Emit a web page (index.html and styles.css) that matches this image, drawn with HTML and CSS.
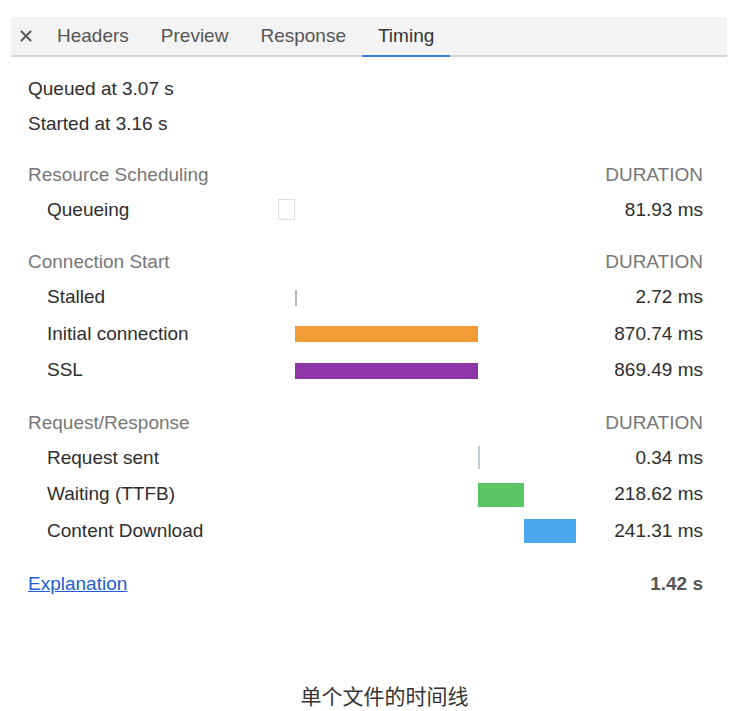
FILE: index.html
```html
<!DOCTYPE html>
<html>
<head>
<meta charset="utf-8">
<link rel="stylesheet" href="styles.css">
</head>
<body>
<div class="panel">
  <div class="tabs">
    <div class="close"><svg width="12" height="12" viewBox="0 0 12 12"><path d="M1.5 1.5L10.5 10.5M10.5 1.5L1.5 10.5" stroke="#5f5f5f" stroke-width="2.2" stroke-linecap="round"/></svg></div>
    <div class="tab">Headers</div>
    <div class="tab">Preview</div>
    <div class="tab">Response</div>
    <div class="tab active">Timing</div>
  </div>
  <div class="content">
    <div class="meta">Queued at 3.07 s</div>
    <div class="meta">Started at 3.16 s</div>

    <div class="section">
      <div class="shead"><span>Resource Scheduling</span><span>DURATION</span></div>
      <div class="row"><div class="label">Queueing</div><div class="track"><div class="bar queue" style="margin-left:0px;width:17px"></div></div><div class="dur">81.93 ms</div></div>
    </div>

    <div class="section">
      <div class="shead"><span>Connection Start</span><span>DURATION</span></div>
      <div class="row"><div class="label">Stalled</div><div class="track"><div class="bar tick" style="margin-left:17px;width:2px"></div></div><div class="dur">2.72 ms</div></div>
      <div class="row"><div class="label">Initial connection</div><div class="track"><div class="bar thin orange" style="margin-left:17px;width:183px"></div></div><div class="dur">870.74 ms</div></div>
      <div class="row"><div class="label">SSL</div><div class="track"><div class="bar thin purple" style="margin-left:17px;width:183px"></div></div><div class="dur">869.49 ms</div></div>
    </div>

    <div class="section">
      <div class="shead"><span>Request/Response</span><span>DURATION</span></div>
      <div class="row"><div class="label">Request sent</div><div class="track"><div class="bar tick tall" style="margin-left:200px;width:2px"></div></div><div class="dur">0.34 ms</div></div>
      <div class="row"><div class="label">Waiting (TTFB)</div><div class="track"><div class="bar thick green" style="margin-left:200px;width:46px"></div></div><div class="dur">218.62 ms</div></div>
      <div class="row"><div class="label">Content Download</div><div class="track"><div class="bar thick blue" style="margin-left:246px;width:52px"></div></div><div class="dur">241.31 ms</div></div>
    </div>

    <div class="footer"><a class="explain" href="#">Explanation</a><span class="total">1.42 s</span></div>
  </div>
</div>
<div class="caption">单个文件的时间线</div>
</body>
</html>
```
FILE: styles.css
```css
html, body {
  margin: 0;
  padding: 0;
  background: #ffffff;
}
body {
  font-family: "Liberation Sans", Arial, "Noto Sans CJK SC", sans-serif;
  font-size: 19px;
  color: #2e2e2e;
}
.panel {
  margin: 17px 0 0 11px;
  width: 716px;
}
.tabs {
  display: flex;
  align-items: stretch;
  height: 38px;
  background: #f3f3f3;
  border-bottom: 2px solid #d6d6d6;
}
.close {
  width: 30px;
  display: flex;
  align-items: center;
  justify-content: center;
}
.tab {
  display: flex;
  align-items: center;
  padding: 0 16px;
  color: #555555;
}
.tab.active {
  color: #333333;
  margin-bottom: -2px;
  border-bottom: 2px solid #3b7ee6;
}
.content {
  padding: 13.5px 24px 0 17px;
}
.meta {
  height: 35px;
  line-height: 35px;
}
.section {
  margin-top: 16px;
}
.shead {
  display: flex;
  justify-content: space-between;
  height: 35px;
  line-height: 35px;
  color: #777777;
}
.row {
  display: flex;
  align-items: center;
  height: 36.5px;
  padding-left: 19px;
}
.label {
  width: 231px;
}
.track {
  width: 298px;
  height: 100%;
  display: flex;
  align-items: center;
}
.dur {
  flex: 1;
  text-align: right;
}
.bar {
  flex: none;
  box-sizing: border-box;
}
.queue {
  height: 21px;
  border: 1px solid #dcdcdc;
  background: #ffffff;
}
.tick {
  height: 16px;
  background: #b8b8b8;
  margin-top: 2px;
}
.tick.tall {
  height: 23px;
  background: #c3cbd3;
  margin-top: 0;
}
.thin {
  height: 16px;
  margin-top: 1px;
}
.thick {
  height: 24px;
  margin-top: 1px;
}
.orange { background: #f29c38; }
.purple { background: #8e37a8; }
.green { background: #5bc464; }
.blue { background: #4aa9ee; }
.footer {
  display: flex;
  justify-content: space-between;
  align-items: center;
  height: 35px;
  margin-top: 17px;
}
.explain {
  color: #2060d4;
  text-decoration: underline;
}
.total {
  font-weight: bold;
  color: #555555;
}
.caption {
  margin-top: 81px;
  padding-left: 22px;
  text-align: center;
  font-size: 21px;
  line-height: 30px;
  color: #333333;
}
```
